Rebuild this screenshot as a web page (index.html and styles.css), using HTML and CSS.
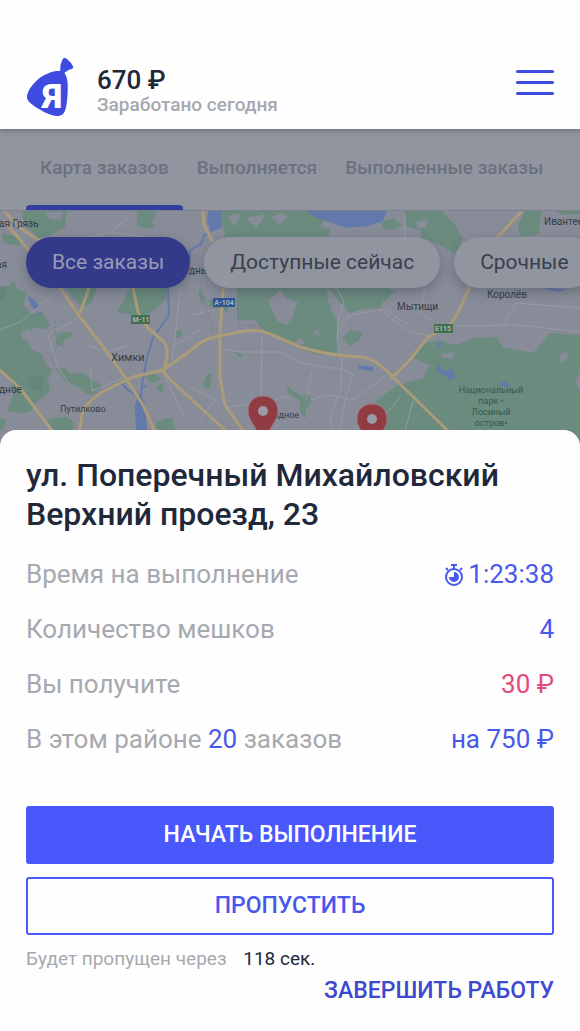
FILE: index.html
```
<!DOCTYPE html>
<html lang="ru">
<head>
  <meta charset="UTF-8">
  <meta name="viewport" content="width=device-width, initial-scale=1">
  <title>Карта заказов</title>
  <link rel="stylesheet" href="styles.css">
</head>
<body>
  <header class="header">
    <svg class="logo" viewBox="0 0 48 60" width="48" height="60" aria-hidden="true">
      <path d="M38 15.500C34 13 26 13.500 15 20C7 26 1 34 1 40C1 44 5 47 12 51.500C18 55 25 59 31 59C36 59 38 57 39.500 52C41 48 42 36 41.700 27C41.500 21 40 18 38 15.500Z"/>
      <path d="M34 16L34.500 8L36.500 2.500Q38 0 41 2Q46 6 47.300 10Q47 12 43.500 12.500L38 16Z"/>
      <text x="16.500" y="51">Я</text>
    </svg>
    <div class="earned">
      <div class="earned-sum">670 ₽</div>
      <div class="earned-label">Заработано сегодня</div>
    </div>
    <button class="menu-btn" type="button" aria-label="Меню">
      <span></span><span></span><span></span>
    </button>
  </header>

  <nav class="tabs">
    <a class="tab active" href="#map">Карта заказов</a>
    <a class="tab" href="#current">Выполняется</a>
    <a class="tab" href="#done">Выполненные заказы</a>
  </nav>

  <section class="map" id="map">
    <svg class="map-canvas" viewBox="0 211 580 236" preserveAspectRatio="xMidYMin slice" aria-hidden="true">
      <!-- Parks -->
      <g class="park">
        <path d="M22 211H67L65 227L50 235L38 238L25 225Z"/>
        <path d="M2 233L22 238L20 246L3 243Z"/>
        <path d="M137 211H157L152 222L156 227L147 229L137 225Z"/>
        <path d="M0 286L8 287L14 281L17 289L27 292L23 305L32 314L43 312L50 325L46 329L33 328L27 340L31 349L43 355L45 364L53 370L48 380L50 392L37 402L30 412L20 413L7 411L13 395L12 380L0 368Z"/>
        <path d="M67 288H97L92 302L82 308L72 297Z"/>
        <path d="M117 312L130 288H168L166 298L160 305L147 315L133 315Z"/>
        <path d="M57 367L66 369L70 374L82 373L92 380L104 386L96 393L88 395L80 388L65 381Z"/>
        <path d="M57 336L62 332L72 333L70 338L64 340L62 347L56 344Z"/>
        <path d="M175 331L181 329L182 336L176 338Z"/>
        <path d="M47 419L67 417L75 423L72 430H52Z"/>
        <path d="M145 376L155 374L162 379L152 383Z"/>
        <path d="M156 386L163 383L163 392L158 390Z"/>
        <path d="M155 422L172 417L175 430H158Z"/>
        <path d="M0 417L6 420L3 430H0Z"/>
        <path d="M222 211H305L325 220L320 226L330 229L328 240H222L226 232L220 225Z"/>
        <path d="M237 288H327L328 302L337 315V353L317 355L290 345L263 330L255 320L237 320Z"/>
        <path d="M328 288H390L380 308L362 309L350 313L340 302Z"/>
        <path d="M342 338L350 330L363 332L359 340L350 346Z"/>
        <path d="M209 300L230 299L227 313L223 309L210 307Z"/>
        <path d="M203 385L208 373L212 374L210 388L205 388Z"/>
        <path d="M234 352L241 352L243 358L238 356Z"/>
        <path d="M286 385L291 389L301 396L308 394L312 401L305 410L306 419L300 412L300 401L288 393Z"/>
        <path d="M200 288L205 299L202 305L198 293Z"/>
        <path d="M405 211H442L455 225L463 239L455 254L438 244L422 238L420 230L405 226Z"/>
        <path d="M383 221L393 218L402 225L395 230L382 229Z"/>
        <path d="M525 211H541L539 234L520 237L518 225Z"/>
        <path d="M380 290H396L385 301H380Z"/>
        <path d="M375 402L397 385L423 378L430 365L413 358L420 345L437 340L457 345L473 338L497 337L503 347L533 353L550 333L580 335V447H375Z"/>
        <path d="M556 211H580V214L562 215Z"/>
      </g>
      <g class="park-dark">
        <path d="M28 377L45 375L42 390L31 389Z"/>
        <path d="M0 286L8 287L4 300H0Z"/>
      </g>
      <!-- Built-up patches inside the parks -->
      <g class="land">
        <path d="M228 216L242 213L234 226Z"/>
        <path d="M246 218L266 214L256 228Z"/>
        <path d="M270 217L283 213L288 217L279 224Z"/>
        <path d="M268 301L280 290L287 299L298 302L291 320L286 325L277 321Z"/>
        <path d="M292 343L302 338L304 343L296 348Z"/>
        <path d="M312 332L319 329L320 336L315 335Z"/>
        <path d="M330 308L342 306L347 315L337 320Z"/>
        <path d="M20 333L29 329L33 336L24 341Z"/>
        <path d="M416 222L428 219L426 227L418 228Z"/>
        <path d="M440 354L455 352L453 359L443 358Z"/>
        <path d="M559 356L567 350L568 358L561 364Z"/>
        <path d="M575 382L580 372V390Z"/>
        <path d="M44 212L64 212L60 220L50 219Z"/>
      </g>
      <!-- Water -->
      <g class="water">
        <path d="M208 211H222L221 228L211 232L207 222Z"/>
        <path d="M305 211H387L383 221L368 226L347 228L317 218Z"/>
        <path d="M27 295L35 301L39 306L35 310L30 303Z"/>
        <path d="M140 392L145 405L147 430H136L135 405Z"/>
        <path d="M437 360L440 368L447 372L452 368L455 378L450 380L437 370Z"/>
        <path d="M358 365L374 367L372 371L359 369Z"/>
        <path d="M380 211L384 218L380 224Z"/>
        <path d="M36 312L42 313L41 316Z"/>
        <path d="M541 288L566 289L559 292Z"/>
        <path d="M498 384L506 381L511 387L503 386Z"/>
        <path d="M439 341L441 342L441 348L438 346Z"/>
      </g>
      <g class="river">
        <path d="M212 230L204 236L201 244L190 250L190 260"/>
        <path d="M168 288L169 315L153 338L148 354L145 368L142 385L140 405L142 430"/>
        <path d="M120 382L128 390L139 397M142 388L147 385"/>
      </g>
      <!-- Streets -->
      <g class="street">
        <path d="M65 244L110 232L135 213M110 232L160 239M180 288L176 330L172 360"/>
        <path d="M80 317L48 335L57 365L70 385M87 345L107 352L130 345M90 365L92 391L125 377"/>
        <path d="M262 335L261 400M220 348L238 352L280 352L300 363L345 370L353 375L345 400L340 430"/>
        <path d="M337 288L344 302L338 320L337 342L342 357L341 388L330 420L333 430"/>
        <path d="M337 335L350 315L385 309L400 320L410 325M310 400L330 395L353 400L390 372"/>
        <path d="M190 387L215 400L200 420M225 408L260 402L290 396M306 400L312 372"/>
        <path d="M425 288L420 312L440 328M452 326L520 325L580 332M503 326L516 303L580 308M380 310L410 332L433 336"/>
        <path d="M0 330L20 322L60 290M165 375L185 420M175 345L200 330"/>
        <path d="M405 430L415 395M400 398L380 420M405 240L405 215M190 315L215 310"/>
      </g>
      <path class="border" d="M200 280L207 310L213 332M55 322L57 345L52 360L58 372M237 300L239 325L260 326"/>
      <!-- Highways -->
      <g class="highway">
        <path d="M4 211L20 228L40 241L60 248M5 222L33 255L60 288L80 317L107 352L125 377L143 405L155 432"/>
        <path d="M89 288L80 313M0 370L20 388L53 432"/>
        <path d="M133 288L138 312L147 327L163 341Q168 346 167 355L164 373L178 387L202 409L225 430"/>
        <path d="M79 432L83 410Q92 397 110 388L133 377L163 370L190 351Q202 340 214 337L245 331Q260 329 270 334L300 347Q330 356 363 357Q376 359 393 377L449 432"/>
        <path d="M203 211L204 225L213 242M223 288L220 335L220 378L225 405L244 432"/>
        <path d="M522 211L495 240M470 286L458 313L450 325L427 338L410 360L391 379"/>
      </g>
      <g class="shield">
        <rect x="131" y="315" width="19" height="9"/><text x="141" y="322">М-11</text>
        <rect x="434" y="324" width="19" height="9"/><text x="443" y="331">E115</text>
        <rect class="shield-blue" x="213" y="298" width="22" height="9"/><text x="224" y="305">A-104</text>
      </g>
      <g class="place">
        <text x="-1" y="227">ая Грязь</text>
        <text x="-4" y="268">ая</text>
        <text x="189" y="274">дный</text>
        <text x="544" y="225">Ивантее</text>
        <text x="487" y="298">Королёв</text>
        <text x="397" y="310">Мытищи</text>
        <text class="place-big" x="111" y="361">Химки</text>
        <text x="-6" y="393">здное</text>
        <text class="place-small" x="60" y="412">Путилково</text>
        <text class="place-small" x="274" y="418">здное</text>
      </g>
      <g class="place place-park">
        <text x="491" y="393">Национальный</text>
        <text x="491" y="404">парк •</text>
        <text x="491" y="415">Лосиный</text>
        <text x="491" y="426">остров•</text>
      </g>
      <!-- Order pins -->
      <g class="pin">
        <path d="M263 396C254 396 248 402 248 411C248 421 257 427 262 442H264C269 427 278 421 278 411C278 402 272 396 263 396Z"/>
        <circle cx="263" cy="411" r="5"/>
        <path d="M372 404C363 404 357 410 357 419C357 429 366 435 371 448H373C378 435 387 429 387 419C387 410 381 404 372 404Z"/>
        <circle cx="372" cy="419" r="5"/>
      </g>
    </svg>
    <div class="filters">
      <button class="filter active" type="button">Все заказы</button>
      <button class="filter" type="button">Доступные сейчас</button>
      <button class="filter" type="button">Срочные</button>
    </div>
  </section>

  <main class="sheet">
    <h1 class="address">ул. Поперечный Михайловский Верхний проезд, 23</h1>
    <dl class="details">
      <div class="row">
        <dt>Время на выполнение</dt>
        <dd>
          <svg class="timer" viewBox="0 0 20 24" width="20" height="24" aria-hidden="true">
            <path class="timer-line" d="M7 2H13M10 2V6M2 5L4 7M18 5L16 7"/>
            <circle class="timer-line" cx="10" cy="14" r="8"/>
            <path d="M10 14V9A5 5 0 1 1 5 14Z"/>
          </svg>
          1:23:38
        </dd>
      </div>
      <div class="row">
        <dt>Количество мешков</dt>
        <dd>4</dd>
      </div>
      <div class="row">
        <dt>Вы получите</dt>
        <dd class="reward">30 ₽</dd>
      </div>
      <div class="row">
        <dt>В этом районе <span class="count">20</span> заказов</dt>
        <dd>на 750 ₽</dd>
      </div>
    </dl>
    <div class="actions">
      <button class="btn btn-primary" type="button">НАЧАТЬ ВЫПОЛНЕНИЕ</button>
      <button class="btn" type="button">ПРОПУСТИТЬ</button>
    </div>
    <p class="skip-note">Будет пропущен через <span class="seconds">118 сек.</span></p>
    <a class="finish" href="#finish">ЗАВЕРШИТЬ РАБОТУ</a>
  </main>
</body>
</html>
```

FILE: styles.css
```
* {
  box-sizing: border-box;
}
body {
  margin: 0;
  min-height: 100vh;
  display: flex;
  flex-direction: column;
  overflow-x: hidden;
  background: #fefefe;
  color: #20283a;
  font-family: Roboto, "Liberation Sans", sans-serif;
}
button {
  font-family: inherit;
  cursor: pointer;
}
a {
  text-decoration: none;
}

/* Header */
.header {
  position: relative;
  z-index: 1;
  display: flex;
  align-items: center;
  padding: 57px 26px 12px;
  background: #fefefe;
  box-shadow: 0 1px 6px #20283a70;
}
.logo {
  fill: #3d4be0;
}
.logo text {
  fill: #fff;
  font-size: 34px;
  font-weight: 900;
}
.earned {
  flex: 1;
  margin-left: 23px;
  padding-top: 10px;
}
.earned-sum {
  font-size: 26px;
  line-height: 26px;
  font-weight: 500;
}
.earned-label {
  font-size: 19px;
  line-height: 24px;
  font-weight: 500;
  color: #a6a9b0;
}
.menu-btn {
  display: flex;
  flex-direction: column;
  gap: 8px;
  margin-bottom: 10px;
  padding: 0;
  border: 0;
  background: none;
}
.menu-btn span {
  width: 38px;
  height: 3px;
  border-radius: 2px;
  background: #3d4be0;
}

/* Tabs */
.tabs {
  display: flex;
  padding: 0 26px;
  background: #91959f;
  border-bottom: 1px solid #7b808c;
}
.tab {
  position: relative;
  padding: 26px 14px 29px;
  font-size: 19px;
  line-height: 26px;
  font-weight: 500;
  white-space: nowrap;
  color: #6b717e;
}
.tab.active::after {
  content: "";
  position: absolute;
  left: 0;
  right: 0;
  bottom: 0;
  height: 5px;
  border-radius: 4px 4px 0 0;
  background: #343da0;
}

/* Map */
.map {
  position: relative;
  flex: 1;
  min-height: 200px;
  margin-bottom: -16px;
  overflow: hidden;
  background: #888c98;
}
.map-canvas {
  position: absolute;
  inset: 0;
  width: 100%;
  height: 100%;
}
.land { fill: #888c98; }
.park { fill: #6b8b7f; }
.park-dark {
  fill: #5f8276;
  opacity: 0.5;
}
.water { fill: #6379ab; }
.river {
  fill: none;
  stroke: #6379ab;
  stroke-width: 2;
}
.street {
  fill: none;
  stroke: #969ba5;
  stroke-width: 1;
}
.border {
  fill: none;
  stroke: #737985;
  stroke-dasharray: 2 2;
}
.highway {
  fill: none;
  stroke: #ab9b78;
  stroke-width: 3;
  stroke-linejoin: round;
}
.shield rect { fill: #41704e; }
.shield .shield-blue { fill: #2f5795; }
.shield text {
  fill: #a9b2b8;
  font-size: 7px;
  font-weight: 700;
  text-anchor: middle;
}
.place {
  fill: #363c49;
  font-size: 10px;
}
.place-big { font-size: 11px; }
.place-small { font-size: 9px; }
.place-park {
  fill: #35584f;
  font-size: 9px;
  text-anchor: middle;
}
.pin path {
  fill: #913c43;
  stroke: #a4767f;
}
.pin circle { fill: #979ba5; }

.filters {
  position: relative;
  display: flex;
  gap: 14px;
  padding: 26px;
}
.filter {
  flex: none;
  padding: 0 26px;
  border: 0;
  border-radius: 26px;
  background: #91959f;
  box-shadow: 0 4px 12px #20283a50;
  font-size: 21px;
  line-height: 51px;
  color: #39404e;
}
.filter.active {
  background: #333a8a;
  color: #989bb6;
}

/* Order sheet */
.sheet {
  position: relative;
  padding: 26px 26px 27px;
  border-radius: 16px 16px 0 0;
  background: #fefefe;
}
.address {
  margin: 0 0 13px;
  font-size: 32px;
  line-height: 39px;
  font-weight: 500;
}
.details {
  margin: 0 0 39px;
}
.row {
  display: flex;
  justify-content: space-between;
  align-items: center;
  font-size: 26px;
  line-height: 55px;
}
.row dt {
  color: #a6a9b0;
}
.row dd {
  display: flex;
  align-items: center;
  gap: 4px;
  margin: 0;
  color: #4958ec;
}
.row .count {
  color: #4958ec;
}
.row .reward {
  color: #e24b7a;
}
.timer {
  fill: #4958ec;
}
.timer-line {
  fill: none;
  stroke: #4958ec;
  stroke-width: 2;
}
.actions {
  display: flex;
  flex-direction: column;
  gap: 13px;
}
.btn {
  padding: 0;
  border: 2px solid #4958fb;
  border-radius: 3px;
  background: #fefefe;
  font-size: 23px;
  line-height: 54px;
  font-weight: 500;
  color: #4958ec;
}
.btn-primary {
  background: #4958fb;
  color: #fefefe;
}
.skip-note {
  margin: 12px 0 7px;
  font-size: 19px;
  line-height: 24px;
  color: #a6a9b0;
}
.seconds {
  margin-left: 12px;
  color: #20283a;
}
.finish {
  display: block;
  font-size: 23px;
  line-height: 26px;
  font-weight: 500;
  text-align: right;
  color: #3d49cf;
}
```
